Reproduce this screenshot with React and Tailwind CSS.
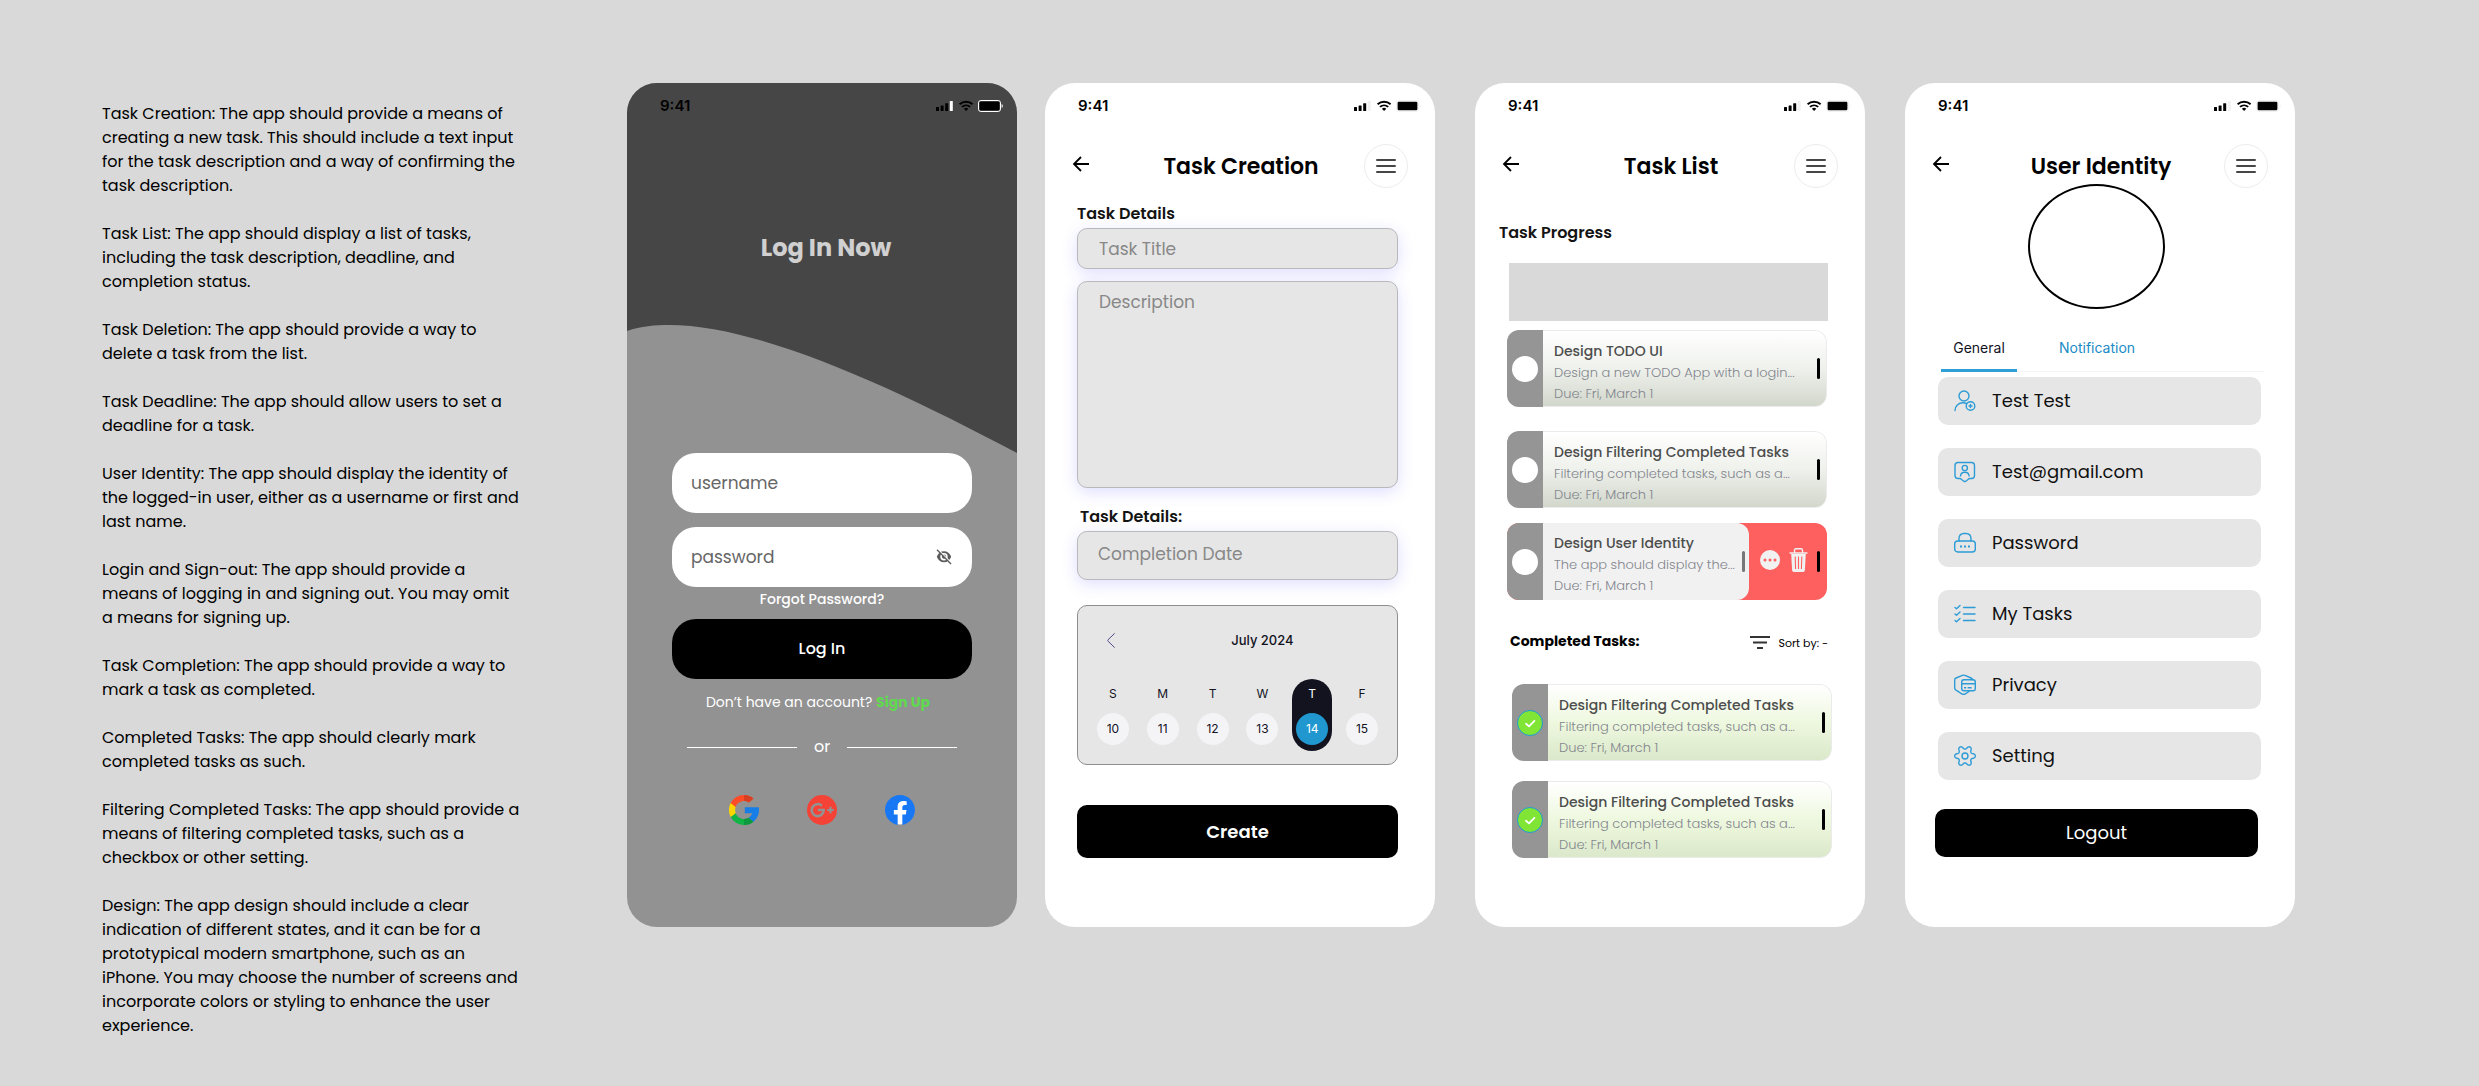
import React from "react";

const NOTES = [
  "Task Creation: The app should provide a means of\ncreating a new task. This should include a text input\nfor the task description and a way of confirming the\ntask description.",
  "Task List: The app should display a list of tasks,\nincluding the task description, deadline, and\ncompletion status.",
  "Task Deletion: The app should provide a way to\ndelete a task from the list.",
  "Task Deadline: The app should allow users to set a\ndeadline for a task.",
  "User Identity: The app should display the identity of\nthe logged-in user, either as a username or first and\nlast name.",
  "Login and Sign-out: The app should provide a\nmeans of logging in and signing out. You may omit\na means for signing up.",
  "Task Completion: The app should provide a way to\nmark a task as completed.",
  "Completed Tasks: The app should clearly mark\ncompleted tasks as such.",
  "Filtering Completed Tasks: The app should provide a\nmeans of filtering completed tasks, such as a\ncheckbox or other setting.",
  "Design: The app design should include a clear\nindication of different states, and it can be for a\nprototypical modern smartphone, such as an\niPhone. You may choose the number of screens and\nincorporate colors or styling to enhance the user\nexperience.",
];

/* ---------- shared pieces ---------- */

function StatusBar({ accent }) {
  return (
    <div className="relative flex h-[46px] items-center justify-between pl-[33px] pr-[14px]">
      <span className="font-['Inter',sans-serif] text-[15px] leading-5 font-semibold">9:41</span>
      <svg width="67" height="12" viewBox="0 0 67 12" aria-hidden="true">
        <rect x="0" y="7" width="3" height="4" rx="0.5" />
        <rect x="4.6" y="5.4" width="3" height="5.6" rx="0.5" />
        <rect x="9.2" y="3.2" width="3" height="7.8" rx="0.5" />
        <rect x="13.8" y="1" width="3" height="10" rx="0.5" fill={accent} />
        <g fill="none" stroke="black" strokeWidth="1.9">
          <path d="M23.6 4.3a9.6 9.6 0 0 1 13 0" />
          <path d="M26 6.9a6.2 6.2 0 0 1 8.2 0" />
        </g>
        <path d="M27.9 8.8a3.3 3.3 0 0 1 4.4 0l-2.2 2.3z" />
        <rect x="42.5" y="0.5" width="22" height="11" rx="2.4" fill="none" stroke={accent} />
        <rect x="43.6" y="1.7" width="19.8" height="8.6" rx="1.2" />
        <path d="M65.6 4v4c.7-.3 1.2-1.1 1.2-2s-.5-1.700-1.200-2z" fill={accent} />
      </svg>
    </div>
  );
}

function Phone({ label, children }) {
  return (
    <section
      aria-label={label}
      className="relative flex min-h-[844px] w-full max-w-[390px] min-w-[340px] flex-col overflow-hidden rounded-[30px] bg-white"
    >
      <StatusBar accent="#f1f1f1" />
      {children}
    </section>
  );
}

function Header({ title }) {
  return (
    <header className="mt-[15px] grid grid-cols-[44px_1fr_44px] items-center px-[27px]">
      <button type="button" aria-label="Back" className="h-11 pb-1">
        <svg width="18" height="16" viewBox="0 0 18 16" fill="none" stroke="black" strokeWidth="1.8">
          <path d="M17 8H2M9 1L2 8l7 7" />
        </svg>
      </button>
      <h2 className="pt-0.5 pl-0.5 text-center text-[22px] leading-8 font-semibold text-black">{title}</h2>
      <button
        type="button"
        aria-label="Menu"
        className="flex size-11 items-center justify-center rounded-full border border-[#ededed]"
      >
        <svg width="20" height="14" viewBox="0 0 20 14" stroke="#464646" strokeWidth="2" strokeLinecap="round">
          <path d="M1 1h18M1 7h18M1 13h18" />
        </svg>
      </button>
    </header>
  );
}

/* ---------- login ---------- */

function GoogleLogo() {
  return (
    <svg width="30" height="30" viewBox="0 0 512 512" aria-hidden="true">
      <defs>
        <clipPath id="rightHalf">
          <rect x="256" y="0" width="256" height="512" />
        </clipPath>
      </defs>
      <path
        fill="#ffd500"
        d="M113.470 309.408L95.648 375.940l-65.139 1.378C11.042 341.211 0 299.900 0 256c0-42.451 10.324-82.483 28.624-117.732l58.006 10.632 25.404 57.644c-5.317 15.501-8.215 32.141-8.215 49.456.002 18.792 3.406 36.797 9.651 53.408z"
      />
      <path
        fill="#167ee6"
        d="M507.527 208.176C510.467 223.662 512 239.655 512 256c0 18.328-1.927 36.206-5.598 53.451-12.462 58.683-45.025 109.925-90.134 146.187l-73.058-3.741-10.338-64.535c29.932-17.554 53.324-45.025 65.646-77.911H270V208.176z"
      />
      {[
        ["#12b347", "#0f993e", "M416.253 455.624C372.396 490.901 316.666 512 256 512c-97.491 0-182.252-54.491-225.491-134.681l82.961-67.910c21.619 57.698 77.278 98.771 142.530 98.771 28.047 0 54.323-7.582 76.870-20.818z"],
        ["#ff4b26", "#d93f21", "M419.404 58.936l-82.933 67.896c-23.335-14.586-50.919-23.012-80.471-23.012-66.729 0-123.429 42.957-143.965 102.724l-83.411-68.276C71.230 56.123 157.060 0 256 0c62.115 0 119.068 22.126 163.404 58.936z"],
      ].map(([light, dark, d]) => (
        <g key={light}>
          <path fill={light} d={d} />
          <path fill={dark} d={d} clipPath="url(#rightHalf)" />
        </g>
      ))}
    </svg>
  );
}

function GooglePlusLogo() {
  return (
    <svg width="30" height="30" viewBox="0 0 30 30" aria-hidden="true">
      <circle cx="15" cy="15" r="15" fill="#f44336" />
      <g fill="none" stroke="#929292" strokeWidth="2.6">
        <path d="M14.800 10.700A6 6 0 1 0 16.700 15H10.800" />
        <path strokeWidth="2.100" d="M23.500 11.700v6.600M20.200 15h6.600" />
      </g>
    </svg>
  );
}

function FacebookLogo() {
  return (
    <svg width="30" height="30" viewBox="0 0 24 24" aria-hidden="true">
      <circle cx="12" cy="12" r="11.500" fill="white" />
      <path
        fill="#1877f2"
        d="M24 12.073c0-6.627-5.373-12-12-12s-12 5.373-12 12c0 5.990 4.388 10.954 10.125 11.854v-8.385H7.078v-3.470h3.047V9.430c0-3.007 1.792-4.669 4.533-4.669 1.312 0 2.686.235 2.686.235v2.953H15.830c-1.491 0-1.956.925-1.956 1.874v2.250h3.328l-.532 3.470h-2.796v8.385C19.612 23.027 24 18.062 24 12.073z"
      />
    </svg>
  );
}

function LoginScreen() {
  return (
    <section
      aria-label="Log in"
      className="relative flex min-h-[844px] w-full max-w-[390px] min-w-[340px] flex-col overflow-hidden rounded-[30px] bg-[#929292]"
    >
      <svg
        className="absolute inset-x-0 top-0 h-[370px] w-full"
        viewBox="0 0 390 370"
        preserveAspectRatio="none"
        aria-hidden="true"
      >
        <path fill="#464646" d="M0 0H390V370C262 302 130 242 42 242C28 242 14 243 0 248Z" />
      </svg>
      <StatusBar accent="#ffffff" />
      <form className="relative flex flex-col px-[45px]" onSubmit={(e) => e.preventDefault()}>
        <h1 className="mt-[103px] pl-2 text-center text-2xl leading-8 font-bold text-[#d0d0d0]">Log In Now</h1>
        <input
          type="text"
          aria-label="username"
          placeholder="username"
          className="mt-[189px] h-[60px] w-full rounded-3xl bg-white px-[19px] text-[17px] outline-none placeholder:text-[#666666]"
        />
        <div className="relative mt-3.5">
          <input
            type="password"
            aria-label="password"
            placeholder="password"
            className="h-[60px] w-full rounded-3xl bg-white pr-12 pl-[19px] text-[17px] outline-none placeholder:text-[#666666]"
          />
          <button type="button" aria-label="Show password" className="absolute inset-y-0 right-5 flex items-center">
            <svg width="16" height="16" viewBox="0 0 16 16" fill="none" stroke="#5c5c5c">
              <path
                fill="#5c5c5c"
                stroke="none"
                fillRule="evenodd"
                d="M8 2.200C4.700 2.200 2 4.200.8 7.700 2 11.200 4.700 13.200 8 13.200s6-2 7.200-5.500C14 4.200 11.300 2.200 8 2.200zM8 4a3.700 3.700 0 1 1 0 7.400A3.700 3.700 0 0 1 8 4z"
              />
              <circle cx="8" cy="7.700" r="2.100" fill="#5c5c5c" stroke="none" />
              <path stroke="white" strokeWidth="1.300" d="M2.200.6l13.400 13.700" />
              <path strokeWidth="1.300" d="M1 .8l14 14.200" />
            </svg>
          </button>
        </div>
        <a href="#forgot" className="mt-0.5 text-center text-sm leading-5 font-medium text-white">
          Forgot Password?
        </a>
        <button type="submit" className="mt-2.5 h-[60px] rounded-3xl bg-black text-base font-medium text-white">
          Log In
        </button>
        <p className="mt-[13px] pr-2 text-center text-sm leading-5 text-white">
          Don’t have an account?{" "}
          <a href="#signup" className="font-bold text-[#5fd94e]">Sign Up</a>
        </p>
        <div className="mt-[25px] flex items-center gap-[17px] px-[15px] text-white">
          <span className="h-px flex-1 bg-white" />
          <span className="text-base leading-5">or</span>
          <span className="h-px flex-1 bg-white" />
        </div>
        <div className="mt-[38px] flex justify-center gap-12">
          <button type="button" aria-label="Google"><GoogleLogo /></button>
          <button type="button" aria-label="Google Plus"><GooglePlusLogo /></button>
          <button type="button" aria-label="Facebook"><FacebookLogo /></button>
        </div>
      </form>
    </section>
  );
}

/* ---------- task creation ---------- */

const DAYS = [
  ["S", 10],
  ["M", 11],
  ["T", 12],
  ["W", 13],
  ["T", 14],
  ["F", 15],
];

function Calendar() {
  return (
    <div className="mt-[25px] h-[160px] rounded-[10px] border border-[#8e8e8e] bg-[#e6e6e6] px-[10px] pt-6 font-['Inter',sans-serif] text-[#12131f]">
      <div className="grid grid-cols-6 items-center">
        <button type="button" aria-label="Previous week" className="flex h-5 items-center justify-center pr-1">
          <svg width="8" height="15" viewBox="0 0 8 15" fill="none" stroke="#4f4b87" strokeLinecap="round">
            <path d="M7.400.6L1 6.800c-.4.4-.4.900 0 1.300l6.400 6.300" />
          </svg>
        </button>
        <span className="col-span-3 col-start-3 text-center text-[13px] leading-5 font-medium">July 2024</span>
      </div>
      <div className="mt-[29px] grid grid-cols-6 justify-items-center">
        {DAYS.map(([day, date]) => {
          const on = date === 14;
          return (
            <button
              key={date}
              type="button"
              aria-pressed={on}
              className={
                on
                  ? "flex h-[72px] w-10 flex-col items-center rounded-full bg-[#12131f] pt-[5px] text-white"
                  : "flex h-[72px] w-10 flex-col items-center pt-[5px]"
              }
            >
              <span className="text-xs leading-5">{day}</span>
              <span
                className={
                  on
                    ? "mt-[9px] flex size-8 items-center justify-center rounded-full bg-[#2197d0] text-xs"
                    : "mt-[9px] flex size-8 items-center justify-center rounded-full bg-[#f4f4f7] text-xs"
                }
              >
                {date}
              </span>
            </button>
          );
        })}
      </div>
    </div>
  );
}

function CreationScreen() {
  return (
    <Phone label="Task Creation">
      <Header title="Task Creation" />
      <form className="flex flex-col pr-[37px] pl-8" onSubmit={(e) => e.preventDefault()}>
        <label htmlFor="title" className="mt-4 text-base leading-5 font-semibold text-[#141414]">Task Details</label>
        <input
          id="title"
          placeholder="Task Title"
          className="mt-1 h-[41px] rounded-[10px] border border-[#b9b9bc] bg-[#e6e6e6] px-[21px] text-[17px] shadow-[0_4px_16px_rgba(90,90,255,0.2)] outline-none placeholder:text-[#888888]"
        />
        <textarea
          aria-label="Description"
          placeholder="Description"
          className="mt-3 h-[207px] resize-none rounded-[10px] border border-[#b9b9bc] bg-[#e6e6e6] px-[21px] py-2 text-[17px] leading-6 shadow-[0_4px_16px_rgba(90,90,255,0.2)] outline-none placeholder:text-[#888888]"
        />
        <label htmlFor="date" className="mt-[19px] pl-[3px] text-base leading-5 font-semibold text-[#141414]">
          Task Details:
        </label>
        <input
          id="date"
          placeholder="Completion Date"
          className="mt-1 h-[49px] rounded-[10px] border border-[#b9b9bc] bg-[#e6e6e6] px-5 pb-1 text-[17px] shadow-[0_4px_16px_rgba(90,90,255,0.2)] outline-none placeholder:text-[#888888]"
        />
        <Calendar />
        <button type="submit" className="mt-10 h-[53px] rounded-[10px] bg-black text-lg font-semibold text-white">
          Create
        </button>
      </form>
    </Phone>
  );
}

/* ---------- task list ---------- */

function Tick({ label, done }) {
  return (
    <div className="relative size-[26px]">
      <input
        type="checkbox"
        aria-label={label}
        defaultChecked={done}
        className="block size-[26px] appearance-none rounded-full bg-white checked:border checked:border-[#1e9bd7] checked:bg-[#80e534]"
      />
      {done && (
        <svg
          className="pointer-events-none absolute inset-0"
          width="26"
          height="26"
          viewBox="0 0 26 26"
          fill="none"
          stroke="white"
          strokeWidth="1.800"
          strokeLinecap="round"
          strokeLinejoin="round"
          aria-hidden="true"
        >
          <path d="M9 13.800l3 2.600 5.400-5.600" />
        </svg>
      )}
    </div>
  );
}

function TaskText({ title, text }) {
  return (
    <div className="min-w-0 flex-1 pt-[9px] pl-[11px] whitespace-nowrap">
      <h4 className="text-sm leading-[22px] font-medium text-[#4c4d4c]">{title}</h4>
      <p className="text-[13px] leading-[22px] font-light text-[#83868e]">{text}</p>
      <p className="text-[13px] leading-5 font-light text-[#83868e]">Due: Fri, March 1</p>
    </div>
  );
}

function TaskCard({ title, text, done }) {
  return (
    <article className="flex h-[77px] overflow-hidden rounded-xl">
      <div className="flex w-9 items-center justify-center bg-[#959595]">
        <Tick label={title} done={done} />
      </div>
      <div
        className={
          done
            ? "flex flex-1 items-center rounded-r-xl border border-l-0 border-[#ebebeb] bg-linear-to-b from-white via-[#eef8df] to-[#dbe8ca] pr-[6px]"
            : "flex flex-1 items-center rounded-r-xl border border-l-0 border-[#ebebeb] bg-linear-to-b from-white via-[#eff1ec] to-[#d2d7cc] pr-[6px]"
        }
      >
        <div className="flex h-full flex-1"><TaskText title={title} text={text} /></div>
        <span className="h-[21px] w-[3px] rounded-full bg-black" />
      </div>
    </article>
  );
}

function SwipedCard() {
  return (
    <article className="flex h-[77px] overflow-hidden rounded-xl bg-[#fe5f5f]">
      <div className="flex w-9 items-center justify-center bg-[#959595]">
        <Tick label="Design User Identity" />
      </div>
      <div className="flex flex-1 items-center rounded-r-xl bg-[#f1f1f1] pr-1">
        <div className="flex h-full flex-1">
          <TaskText title="Design User Identity" text="The app should display the..." />
        </div>
        <span className="h-[21px] w-[3px] rounded-full bg-[#777777]" />
      </div>
      <div className="flex w-[78px] items-center justify-between pr-[7px] pl-[11px]">
        <button type="button" aria-label="More" className="pb-1">
          <svg width="20" height="20" viewBox="0 0 20 20">
            <circle cx="10" cy="10" r="10" fill="#f1f1f1" />
            <g fill="#fe5f5f">
              <circle cx="5" cy="10" r="1.500" />
              <circle cx="10" cy="10" r="1.500" />
              <circle cx="15" cy="10" r="1.500" />
            </g>
          </svg>
        </button>
        <button type="button" aria-label="Delete" className="pb-1">
          <svg width="19" height="24" viewBox="0 0 19 24">
            <path
              d="M5.500 5V2.200C5.500 1.300 6.100.7 7 .7h5c.9 0 1.500.6 1.500 1.500V5"
              fill="none"
              stroke="#f1f1f1"
              strokeWidth="1.400"
            />
            <path d="M.8 4.200h17.400c.5 0 .5 1.600 0 1.600H.8c-.5 0-.5-1.600 0-1.600z" fill="#f1f1f1" />
            <path d="M2.200 6h14.600l-.9 16.300c-.1 1-.8 1.700-1.800 1.700H4.900c-1 0-1.700-.7-1.800-1.700z" fill="#f1f1f1" />
            <path d="M6.200 8.500l.4 12.500M9.500 8.500V21M12.800 8.500L12.400 21" stroke="#fe5f5f" strokeWidth="1.100" fill="none" />
          </svg>
        </button>
        <span className="h-[21px] w-[3px] rounded-full bg-black" />
      </div>
    </article>
  );
}

function ListScreen() {
  const filtering = { title: "Design Filtering Completed Tasks", text: "Filtering completed tasks, such as a..." };
  return (
    <Phone label="Task List">
      <Header title="Task List" />
      <h3 className="mt-[35px] pl-6 text-base leading-5 font-semibold text-[#141414]">Task Progress</h3>
      <div className="mt-5 mr-[37px] ml-[34px] h-[58px] bg-[#d9d9d9]" />
      <div className="mt-[9px] mr-[38px] ml-8 flex flex-col">
        <TaskCard title="Design TODO UI" text="Design a new TODO App with a login..." />
        <div className="mt-6 mb-[15px]">
          <TaskCard {...filtering} />
        </div>
        <SwipedCard />
      </div>
      <div className="mt-[31px] flex h-5 items-center justify-between pr-[37px] pl-[35px]">
        <h3 className="text-sm leading-5 font-bold text-black">Completed Tasks:</h3>
        <button type="button" className="flex items-center gap-2 pt-1 text-[11px] leading-5 text-black">
          <svg width="20" height="14" viewBox="0 0 20 14" stroke="#333333" strokeWidth="1.800" aria-hidden="true">
            <path d="M0 1h20M3 6.500h14M7 12h6" />
          </svg>
          Sort by: -
        </button>
      </div>
      <div className="mt-[33px] mr-[33px] ml-[37px] flex flex-col gap-5">
        <TaskCard {...filtering} done />
        <TaskCard {...filtering} done />
      </div>
    </Phone>
  );
}

/* ---------- profile ---------- */

// Outline of a six-lobed gear centred in a 22x22 box.
const GEAR =
  "M" +
  Array.from({ length: 120 }, (_, i) => {
    const a = (i / 120) * Math.PI * 2;
    const wave = Math.cos(6 * a);
    const r = 8.600 + 1.700 * Math.sign(wave) * Math.pow(Math.abs(wave), 0.7);
    return `${(11 + r * Math.cos(a)).toFixed(2)} ${(11 + r * Math.sin(a)).toFixed(2)}`;
  }).join("L") +
  "Z";

const ROWS = [
  [
    "Test Test",
    <>
      <circle cx="10" cy="6" r="5" />
      <path d="M1 20.500c0-4.500 3.500-7.700 8-7.700 1.400 0 2.700.2 3.800.8" />
      <circle cx="16.500" cy="16" r="4.300" />
      <path d="M16.500 14.500v3M15 16h3" />
    </>,
  ],
  [
    "Test@gmail.com",
    <>
      <path d="M4 1.500h13.500c1.700 0 3 1.300 3 3v10c0 1.700-1.300 3-3 3h-1.700c-.8 0-1.200.4-1.800 1l-2.200 1.700c-.7.500-1.300.5-2 0L7.600 18.500c-.6-.6-1-1-1.800-1H4c-1.700 0-3-1.300-3-3v-10c0-1.700 1.300-3 3-3z" />
      <circle cx="10.800" cy="7" r="2.600" />
      <path d="M6.500 15c.2-2.500 1.700-3.700 4.300-3.700s4.100 1.200 4.300 3.700" />
    </>,
  ],
  [
    "Password",
    <>
      <rect x="0.700" y="9" width="20.600" height="11" rx="3" />
      <path d="M5 9V6.800C5 3.600 7 1.500 10 1.500h2c3 0 5 2.100 5 5.300V9" />
      <path strokeWidth="1.800" strokeLinecap="butt" d="M6 14.500h2M10 14.500h2M14 14.500h2" />
    </>,
  ],
  [
    "My Tasks",
    <>
      <path d="M1 4.500l1.500 1.200L6 2.500M1 11l1.500 1.200L6 9M1 17.500l1.500 1.200L6 15.500" />
      <path d="M9.500 4.500H21M9.500 11H21M9.500 17.500H21" />
    </>,
  ],
  [
    "Privacy",
    <>
      <path d="M18.500 5.500c-.2-.7-.6-1.100-1.500-1.500L11 1.400a3.500 3.500 0 0 0-2.600 0L2 4C1 4.400.7 5 .7 6v8c0 1 .3 1.500 1.300 2.200l5.800 3.600c1.200.7 2.300.7 3.500 0L15 17.500" />
      <rect x="7.700" y="5.800" width="13.600" height="11" rx="2.200" />
      <path d="M7.700 9.800h13.600" />
      <path strokeLinecap="butt" d="M10 13.700h2.200M13.600 13.700h4" />
    </>,
  ],
  [
    "Setting",
    <>
      <circle cx="11" cy="11" r="3" />
      <path d={GEAR} />
    </>,
  ],
];

function ProfileScreen() {
  return (
    <Phone label="User Identity">
      <Header title="User Identity" />
      <div className="relative -mt-1 mr-[7px] h-[125px] w-[137px] self-center rounded-[50%] border-2 border-black" />
      <div
        role="tablist"
        className="mt-[17px] mr-[31px] ml-9 flex h-[46px] gap-[42px] border-b border-[#f3f3f3] font-['Inter',sans-serif] text-sm"
      >
        <button
          type="button"
          role="tab"
          aria-selected="true"
          className="-mb-px w-[76px] border-b-3 border-[#2f9fd8] text-[#12131f]"
        >
          General
        </button>
        <button type="button" role="tab" aria-selected="false" className="w-[76px] pb-0.5 whitespace-nowrap text-[#1a8bc5]">
          Notification
        </button>
      </div>
      <div className="mt-[5px] mr-[34px] ml-[33px] flex flex-col gap-[23px]">
        {ROWS.map(([name, icon]) => (
          <button
            key={name}
            type="button"
            className="flex h-12 items-center gap-4 rounded-[10px] bg-[#e6e6e6] pl-4 text-lg leading-6 text-[#111111]"
          >
            <svg
              width="22"
              height="22"
              viewBox="0 0 22 22"
              fill="none"
              stroke="#2d9cd6"
              strokeWidth="1.400"
              strokeLinecap="round"
              strokeLinejoin="round"
              aria-hidden="true"
            >
              {icon}
            </svg>
            {name}
          </button>
        ))}
      </div>
      <button
        type="button"
        className="mt-[29px] mr-[37px] ml-[30px] h-12 rounded-[10px] bg-black text-lg text-white"
      >
        Logout
      </button>
    </Phone>
  );
}

export default function App() {
  return (
    <main className="flex min-h-screen items-start bg-[#d9d9d9] pr-[184px] pl-[102px] font-['Poppins','Inter',sans-serif] text-black">
      <section
        aria-label="Requirements"
        className="mt-[102px] flex flex-1 flex-col gap-6 pr-10 pb-12 text-base leading-6 whitespace-pre text-black"
      >
        {NOTES.map((note) => (
          <p key={note}>{note}</p>
        ))}
      </section>
      <div className="mt-[83px] flex w-[1668px] gap-10">
        <div className="flex w-[808px] gap-7">
          <LoginScreen />
          <CreationScreen />
        </div>
        <ListScreen />
        <ProfileScreen />
      </div>
    </main>
  );
}
